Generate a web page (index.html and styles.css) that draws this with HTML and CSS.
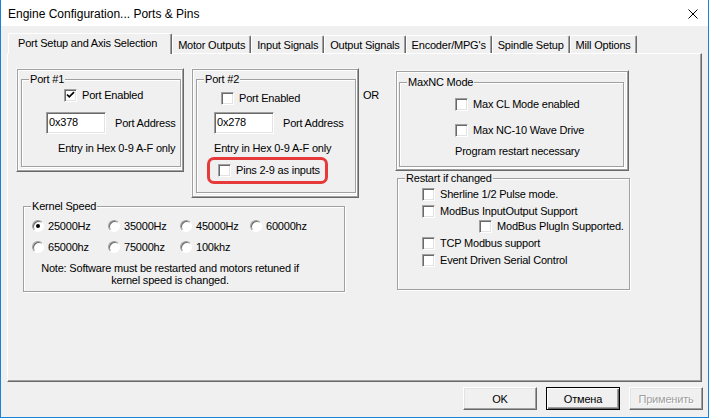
FILE: index.html
```html
<!DOCTYPE html>
<html lang="en">
<head>
    <meta charset="UTF-8">
    <title>Engine Configuration... Ports &amp; Pins</title>
    <link rel="stylesheet" href="styles.css">
</head>
<body>
    <div class="window">
        <div class="titlebar">
            <span class="title">Engine Configuration... Ports &amp; Pins</span>
            <svg class="close" width="10" height="10" viewBox="0 0 10 10">
                <path d="M0.5 0.5 L9.5 9.5 M9.5 0.5 L0.5 9.5" stroke="#000" stroke-width="1" fill="none"/>
            </svg>
        </div>
        <div class="client">
            <div class="tabs">
                <div class="tab active">Port Setup and Axis Selection</div>
                <div class="tab">Motor Outputs</div>
                <div class="tab">Input Signals</div>
                <div class="tab">Output Signals</div>
                <div class="tab">Encoder/MPG's</div>
                <div class="tab">Spindle Setup</div>
                <div class="tab">Mill Options</div>
            </div>
            <div class="panel">
                <div class="col-left">
                    <div class="ports">
                        <div class="frame port1">
                            <div class="group">
                                <span class="group-title">Port #1</span>
                                <div class="check p1-enabled">
                                    <span class="box"><svg width="9" height="9" viewBox="0 0 9 9"><path d="M1 3.5 L3.3 5.8 L8 1.2" stroke="#000" stroke-width="1.7" fill="none"/></svg></span>
                                    Port Enabled
                                </div>
                                <div class="addr p1-addr">
                                    <input class="hex" type="text" value="0x378">
                                    <span>Port Address</span>
                                </div>
                                <div class="hint p1-hint">Entry in Hex 0-9 A-F only</div>
                            </div>
                        </div>
                        <div class="frame port2">
                            <div class="group">
                                <span class="group-title">Port #2</span>
                                <div class="check p2-enabled"><span class="box"></span>Port Enabled</div>
                                <div class="addr p2-addr">
                                    <input class="hex" type="text" value="0x278">
                                    <span>Port Address</span>
                                </div>
                                <div class="hint p2-hint">Entry in Hex 0-9 A-F only</div>
                                <div class="highlight">
                                    <div class="check"><span class="box"></span>Pins 2-9 as inputs</div>
                                </div>
                            </div>
                        </div>
                        <div class="or">OR</div>
                    </div>
                    <div class="group kernel">
                        <span class="group-title">Kernel Speed</span>
                        <div class="radios">
                            <div class="radio"><span class="dot on"></span>25000Hz</div>
                            <div class="radio"><span class="dot"></span>35000Hz</div>
                            <div class="radio"><span class="dot"></span>45000Hz</div>
                            <div class="radio"><span class="dot"></span>60000hz</div>
                            <div class="radio"><span class="dot"></span>65000hz</div>
                            <div class="radio"><span class="dot"></span>75000hz</div>
                            <div class="radio"><span class="dot"></span>100khz</div>
                        </div>
                        <div class="note">Note: Software must be restarted and motors retuned if<br>kernel speed is changed.</div>
                    </div>
                </div>
                <div class="col-right">
                    <div class="frame maxnc">
                        <div class="group">
                            <span class="group-title">MaxNC Mode</span>
                            <div class="check mx-first"><span class="box"></span>Max CL Mode enabled</div>
                            <div class="check mx-second"><span class="box"></span>Max NC-10 Wave Drive</div>
                            <div class="hint mx-hint">Program restart necessary</div>
                        </div>
                    </div>
                    <div class="group restart">
                        <span class="group-title">Restart if changed</span>
                        <div class="check rs-first"><span class="box"></span>Sherline 1/2 Pulse mode.</div>
                        <div class="check rs-row"><span class="box"></span>ModBus InputOutput Support</div>
                        <div class="check rs-plugin"><span class="box"></span>ModBus PlugIn Supported.</div>
                        <div class="check rs-row"><span class="box"></span>TCP Modbus support</div>
                        <div class="check rs-row"><span class="box"></span>Event Driven Serial Control</div>
                    </div>
                </div>
            </div>
            <div class="buttons">
                <button class="btn">OK</button>
                <button class="btn default">Отмена</button>
                <button class="btn" disabled>Применить</button>
            </div>
        </div>
    </div>
</body>
</html>
```

FILE: styles.css
```css
* {
    box-sizing: border-box;
}
body {
    margin: 0;
    background: #fff;
    font-family: "Liberation Sans", Arial, sans-serif;
    font-size: 11px;
    letter-spacing: -0.2px;
    color: #000;
}
.window {
    width: 709px;
    height: 418px;
    border: 1px solid #1883d7;
    border-top: none;
    background: #f0f0f0;
    display: flex;
    flex-direction: column;
}
.titlebar {
    height: 26px;
    background: #fff;
    display: flex;
    align-items: center;
    justify-content: space-between;
    padding-left: 7px;
    padding-top: 1px;
}
.title {
    font-size: 12px;
    letter-spacing: 0;
}
.close {
    margin-right: 10px;
}
.client {
    flex: 1;
    display: flex;
    flex-direction: column;
}

/* tabs */
.tabs {
    display: flex;
    align-items: flex-end;
    margin: 7px 0 0 7px;
    height: 20px;
}
.tab {
    height: 18px;
    line-height: 13px;
    padding: 3px 5px 0 5px;
    border: 1px solid;
    border-color: #fff #696969 transparent #fff;
    border-bottom: none;
    border-radius: 2px 2px 0 0;
    box-shadow: inset -1px 0 0 #a0a0a0;
    white-space: nowrap;
}
.tab.active {
    height: 21px;
    margin-bottom: -1px;
    padding: 3px 14px 0 9px;
    background: #f0f0f0;
    position: relative;
    z-index: 1;
}

/* page */
.panel {
    margin-left: 6px;
    width: 695px;
    height: 329px;
    border: 1px solid;
    border-color: #fff #696969 #696969 #fff;
    box-shadow: inset -1px -1px 0 #a0a0a0;
    padding: 14px 0 0 8px;
    display: flex;
}
.col-left {
    width: 379px;
}
.ports {
    display: flex;
    align-items: flex-start;
}
.frame {
    border: 1px solid;
    border-color: #f8f8f8 #696969 #696969 #f8f8f8;
    box-shadow: inset 0 0 0 1px #a0a0a0, inset 0 0 0 2px #fff;
}
.group {
    position: relative;
    border: 1px solid #a0a0a0;
    box-shadow: inset 1px 1px 0 #fff, 1px 1px 0 #fff;
}
.group-title {
    position: absolute;
    top: -7px;
    left: 7px;
    padding: 0 1px;
    line-height: 13px;
    background: #f0f0f0;
    white-space: nowrap;
}
.port1 {
    width: 168px;
    height: 104px;
}
.port1 .group {
    margin: 10px 0 0 4px;
    width: 160px;
    height: 88px;
}
.port2 {
    width: 168px;
    height: 130px;
    margin-left: 7px;
}
.port2 .group {
    margin: 10px 0 0 4px;
    width: 160px;
    height: 114px;
}
.or {
    margin: 21px 0 0 4px;
    line-height: 13px;
}

/* controls */
.check {
    display: flex;
    align-items: center;
    height: 13px;
    line-height: 13px;
    white-space: nowrap;
}
.box {
    width: 13px;
    height: 13px;
    margin-right: 5px;
    flex-shrink: 0;
    background: #fff;
    border: 1px solid;
    border-color: #a0a0a0 #fff #fff #a0a0a0;
    box-shadow: inset 1px 1px 0 #696969, inset -1px -1px 0 #e3e3e3;
    display: flex;
    align-items: center;
    justify-content: center;
}
.box svg {
    display: block;
}
.addr {
    display: flex;
    align-items: center;
    white-space: nowrap;
}
.hex {
    width: 60px;
    height: 22px;
    margin: 0 9px 0 0;
    padding: 0 0 2px 2px;
    font-family: inherit;
    font-size: 11px;
    letter-spacing: -0.2px;
    color: #000;
    background: #fff;
    border: 1px solid;
    border-color: #a0a0a0 #fff #fff #a0a0a0;
    box-shadow: inset 1px 1px 0 #696969, inset -1px -1px 0 #e3e3e3;
    outline: none;
}
.hint {
    line-height: 13px;
    white-space: nowrap;
}
.p1-enabled { margin: 9px 0 0 42px; }
.p1-addr { margin: 10px 0 0 24px; }
.p1-hint { margin: 8px 0 0 36px; }
.p2-enabled { margin: 12px 0 0 24px; }
.p2-addr { margin: 7px 0 0 17px; }
.p2-hint { margin: 8px 0 0 17px; }
.highlight {
    margin: 2px 0 0 10px;
    width: 121px;
    height: 27px;
    border: 3px solid #e5393a;
    border-radius: 7px;
    padding-left: 8px;
    display: flex;
    align-items: center;
}

/* kernel speed */
.kernel {
    margin: 8px 0 0 7px;
    width: 322px;
    height: 86px;
}
.radios {
    display: grid;
    grid-template-columns: 76px 72px 70px auto;
    row-gap: 9px;
    margin: 13px 0 0 8px;
}
.radio {
    display: flex;
    align-items: center;
    height: 12px;
    line-height: 13px;
    white-space: nowrap;
}
.dot {
    width: 12px;
    height: 12px;
    margin-right: 4px;
    border-radius: 50%;
    background: #fff;
    border: 1px solid;
    border-color: #a0a0a0 #fff #fff #a0a0a0;
    box-shadow: inset 1px 1px 0 #696969;
    display: flex;
    align-items: center;
    justify-content: center;
}
.dot.on::after {
    content: "";
    width: 4px;
    height: 4px;
    border-radius: 50%;
    background: #000;
}
.note {
    width: 292px;
    margin-top: 9px;
    line-height: 12px;
    text-align: center;
}

/* right column */
.col-right {
    width: 240px;
}
.maxnc {
    margin-top: 2px;
    width: 234px;
    height: 101px;
}
.maxnc .group {
    margin: 11px 0 0 3px;
    width: 225px;
    height: 85px;
}
.mx-first { margin: 15px 0 0 55px; }
.mx-second { margin: 13px 0 0 55px; }
.mx-hint { margin: 8px 0 0 55px; }
.restart {
    margin: 7px 0 0 2px;
    width: 233px;
    height: 112px;
}
.rs-first { margin: 9px 0 0 24px; }
.rs-row { margin: 4px 0 0 24px; }
.rs-plugin { margin: 2px 0 0 81px; }

/* dialog buttons */
.buttons {
    display: flex;
    justify-content: flex-end;
    gap: 9px;
    margin-top: 5px;
    padding-right: 5px;
}
.btn {
    width: 74px;
    height: 23px;
    padding: 0;
    font-family: inherit;
    font-size: 11px;
    letter-spacing: -0.2px;
    color: #000;
    background: #f0f0f0;
    border: 1px solid;
    border-color: #fff #696969 #696969 #fff;
    box-shadow: inset -1px -1px 0 #a0a0a0, inset 1px 1px 0 #e3e3e3;
}
.btn.default {
    border: 1px solid #000;
    box-shadow: inset 1px 1px 0 #fff, inset -1px -1px 0 #696969, inset -2px -2px 0 #a0a0a0;
}
.btn:disabled {
    color: #a0a0a0;
    text-shadow: 1px 1px 0 #fff;
}
```
